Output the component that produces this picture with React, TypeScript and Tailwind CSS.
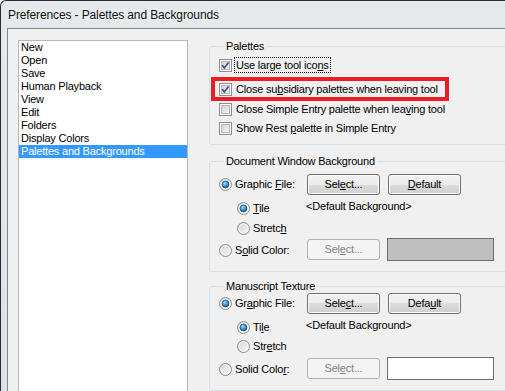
import { useId } from 'react';

// Windows 7 style "Preferences" dialog, left part only (window is cut at the right)

const listItems = [
  'New',
  'Open',
  'Save',
  'Human Playback',
  'View',
  'Edit',
  'Folders',
  'Display Colors',
  'Palettes and Backgrounds',
];

function CheckBox({ checked }: { checked: boolean }) {
  const id = useId();
  return (
    <svg width="13" height="13" viewBox="0 0 13 13" className="shrink-0">
      <defs>
        <linearGradient id={id} x1="0" y1="0" x2="1" y2="1">
          <stop offset="0" stopColor="#cdd0d4" />
          <stop offset="1" stopColor="#f7f7f7" />
        </linearGradient>
      </defs>
      <rect x="0.5" y="0.5" width="12" height="12" fill="#ffffff" stroke="#8e8f8f" />
      <rect x="2.5" y="2.5" width="8" height="8" fill={`url(#${id})`} stroke="#b4b7bb" />
      {checked && (
        <path d="M3.3 6.4 L5.4 8.9 L9.6 3.4" fill="none" stroke="#3d4f8a" strokeWidth="1.7" />
      )}
    </svg>
  );
}

function Radio({ checked }: { checked: boolean }) {
  const id = useId();
  return (
    <svg width="13" height="13" viewBox="0 0 13 13" className="shrink-0">
      <defs>
        <linearGradient id={`${id}a`} x1="0" y1="0" x2="1" y2="1">
          <stop offset="0" stopColor="#d4d4d4" />
          <stop offset="1" stopColor="#f8f8f8" />
        </linearGradient>
        <radialGradient id={`${id}b`} cx="0.4" cy="0.35" r="0.7">
          <stop offset="0" stopColor="#a9e0ff" />
          <stop offset="0.5" stopColor="#3c9ad6" />
          <stop offset="1" stopColor="#0f4d80" />
        </radialGradient>
      </defs>
      <circle cx="6.5" cy="6.5" r="6" fill={`url(#${id}a)`} stroke="#8b8c8c" />
      <circle cx="6.5" cy="6.5" r="4.6" fill="none" stroke="#ffffff" strokeOpacity="0.6" />
      {checked && <circle cx="6.5" cy="6.5" r="3.4" fill={`url(#${id}b)`} stroke="#1a4b75" strokeWidth="0.7" />}
    </svg>
  );
}

function Button({ children, disabled }: { children: React.ReactNode; disabled?: boolean }) {
  return (
    <button
      className={
        disabled
          ? 'w-[73px] h-[21px] shrink-0 rounded-[3px] border border-[#adb2b5] bg-[#f4f4f4] text-[#838383] flex items-center justify-center'
          : 'w-[73px] h-[21px] shrink-0 rounded-[3px] border border-[#707070] bg-[linear-gradient(to_bottom,#f2f2f2_0%,#ebebeb_50%,#dddddd_50%,#cfcfcf_100%)] shadow-[inset_0_0_0_1px_#fbfbfb] text-black flex items-center justify-center'
      }
    >
      {children}
    </button>
  );
}

function RadioRow({ checked, children, indent }: { checked: boolean; children: React.ReactNode; indent?: boolean }) {
  return (
    <div className={indent ? 'flex items-center gap-[3px] pl-[18px]' : 'flex items-center gap-[3px]'}>
      <Radio checked={checked} />
      <span className="leading-[13px]">{children}</span>
    </div>
  );
}

function CheckRow({ checked, children, focused }: { checked: boolean; children: React.ReactNode; focused?: boolean }) {
  return (
    <div className="flex items-center gap-[2px] h-[16px]">
      <CheckBox checked={checked} />
      <span
        className={
          focused
            ? 'border border-dotted border-black px-[1px] leading-[14px]'
            : 'border border-transparent px-[1px] leading-[14px]'
        }
      >
        {children}
      </span>
    </div>
  );
}

type BgProps = {
  title: string;
  top: string;
  rowA: string;
  rowB: string;
  rowC: string;
  rowD: string;
  colorBox: string;
  graphic: React.ReactNode;
  select1: React.ReactNode;
  dflt: React.ReactNode;
  tile: React.ReactNode;
  stretch: React.ReactNode;
  solid: React.ReactNode;
  select2: React.ReactNode;
};

function BackgroundGroup(p: BgProps) {
  return (
    <fieldset className={`${p.top} border border-[#d5dfe5] rounded-[3px] pl-[9px] pb-[10px]`}>
      <legend className="ml-[5px] px-[2px] leading-[13px]">{p.title}</legend>
      <div className={`${p.rowA} flex items-center h-[21px]`}>
        <div className="w-[88px]">
          <RadioRow checked>{p.graphic}</RadioRow>
        </div>
        <Button>{p.select1}</Button>
        <div className="ml-[8px]">
          <Button>{p.dflt}</Button>
        </div>
      </div>
      <div className={`${p.rowB} flex items-center h-[16px]`}>
        <div className="w-[87px]">
          <RadioRow checked indent>{p.tile}</RadioRow>
        </div>
        <span className="-mt-[3px]">&lt;Default Background&gt;</span>
      </div>
      <div className={`${p.rowC} flex items-center h-[16px]`}>
        <RadioRow checked={false} indent>{p.stretch}</RadioRow>
      </div>
      <div className={`${p.rowD} flex items-center h-[23px]`}>
        <div className="w-[88px] pt-[2px]">
          <RadioRow checked={false}>{p.solid}</RadioRow>
        </div>
        <Button disabled>{p.select2}</Button>
        <div className={`ml-[7px] w-[107px] h-[23px] border border-[#6d6d6d] ${p.colorBox}`} />
      </div>
    </fieldset>
  );
}

export default function App() {
  return (
    <div className="w-[505px] h-[391px] overflow-hidden bg-white font-['Liberation_Sans',Arial,sans-serif] text-[11px] tracking-[-0.2px] text-black">
      <div className="w-[560px] h-[440px] rounded-tl-[6px] border-l border-t border-[#2a2d30] bg-[linear-gradient(to_bottom,#e6e9ec,#dde1e5)] pl-[6px] flex flex-col">
        {/* 제목 표시줄 */}
        <div className="h-[27px] pl-[1px] pt-[6px]">
          <span className="text-[12px] leading-[14px] tracking-[-0.12px] text-[#111] [text-shadow:0_0_6px_#ffffff]">
            Preferences - Palettes and Backgrounds
          </span>
        </div>

        {/* 클라이언트 영역 */}
        <div className="flex-1 border-l border-t border-[#80868d] bg-[#f0f0f0] flex items-start pt-[11px] pl-[10px]">
          <div className="w-[170px] h-[400px] shrink-0 border border-[#b3b7bf] bg-white">
            {listItems.map((item, i) => (
              <div
                key={item}
                className={
                  i === listItems.length - 1
                    ? 'h-[13px] leading-[13px] px-[2px] bg-[#3399ff] text-white whitespace-nowrap'
                    : 'h-[13px] leading-[13px] px-[2px] whitespace-nowrap'
                }
              >
                {item}
              </div>
            ))}
          </div>

          <div className="ml-[21px] w-[320px] shrink-0 flex flex-col">
            {/* Palettes */}
            <fieldset className="border border-[#d5dfe5] rounded-[3px] pl-[9px] pt-[4px] pb-[8px]">
              <legend className="ml-[5px] px-[2px] leading-[13px]">Palettes</legend>
              <CheckRow checked focused>
                Use large tool ico<u>n</u>s
              </CheckRow>
              <div className="relative mt-[8px]">
                <CheckRow checked>
                  Close su<u>b</u>sidiary palettes when leaving tool
                </CheckRow>
                <div className="absolute -left-[8px] -top-[4px] w-[238px] h-[24px] border-4 border-[#ec1c24]" />
              </div>
              <div className="mt-[4px]">
                <CheckRow checked={false}>
                  Close Simple Entry palette when lea<u>v</u>ing tool
                </CheckRow>
              </div>
              <div className="mt-[3px]">
                <CheckRow checked={false}>
                  Show Rest <u>p</u>alette in Simple Entry
                </CheckRow>
              </div>
            </fieldset>

            <BackgroundGroup
              title="Document Window Background"
              top="mt-[10px]"
              rowA="mt-[6px]"
              rowB="mt-[5px]"
              rowC="mt-[4px]"
              rowD="mt-[2px]"
              colorBox="bg-[#bfbfbf]"
              graphic={<>Graphic <u>F</u>ile:</>}
              select1={<>Sel<u>e</u>ct...</>}
              dflt={<><u>D</u>efault</>}
              tile={<><u>T</u>ile</>}
              stretch={<>Stretc<u>h</u></>}
              solid={<>S<u>o</u>lid Color:</>}
              select2={<>Sel<u>e</u>ct...</>}
            />

            <BackgroundGroup
              title="Manuscript Texture"
              top="mt-[8px]"
              rowA="mt-0"
              rowB="mt-[5px]"
              rowC="mt-[3px]"
              rowD="mt-[3px]"
              colorBox="bg-white"
              graphic={<>Gr<u>a</u>phic File:</>}
              select1={<>Sele<u>c</u>t...</>}
              dflt={<>Defa<u>u</u>lt</>}
              tile={<>Ti<u>l</u>e</>}
              stretch={<>Str<u>e</u>tch</>}
              solid={<>Solid Colo<u>r</u>:</>}
              select2={<>Sel<u>e</u>ct...</>}
            />
          </div>
        </div>
      </div>
    </div>
  );
}
